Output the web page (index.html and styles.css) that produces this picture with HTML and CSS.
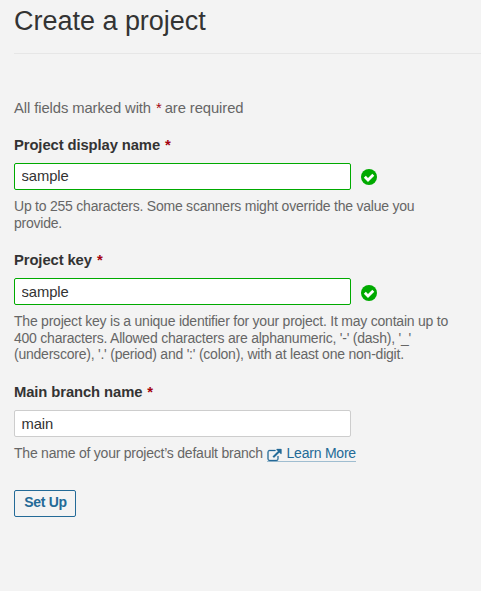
FILE: index.html
```html
<!DOCTYPE html>
<html lang="en">
<head>
<meta charset="utf-8">
<title>Create a project</title>
<link rel="stylesheet" href="styles.css">
</head>
<body>
<main class="page">
  <header class="page-header"><h1>Create a project</h1></header>
  <form class="form">
    <p class="notice">All fields marked with <span class="required">*</span> are required</p>
    <section class="field field-name">
      <label for="name">Project display name <span class="required">*</span></label>
      <div class="control">
        <input class="valid raised" id="name" type="text" value="sample">
        <svg class="check" viewBox="0 0 16 16"><circle cx="8" cy="8" r="8"/><path d="M3.8 7.8 7 11l5.3-5.3"/></svg>
      </div>
      <p class="hint">Up to 255 characters. Some scanners might override the value you<br>provide.</p>
    </section>
    <section class="field field-key">
      <label for="key">Project key <span class="required">*</span></label>
      <div class="control">
        <input class="valid" id="key" type="text" value="sample">
        <svg class="check check-low" viewBox="0 0 16 16"><circle cx="8" cy="8" r="8"/><path d="M3.8 7.8 7 11l5.3-5.3"/></svg>
      </div>
      <p class="hint">The project key is a unique identifier for your project. It may contain up to<br>400 characters. Allowed characters are alphanumeric, '-' (dash), '_'<br>(underscore), '.' (period) and ':' (colon), with at least one non-digit.</p>
    </section>
    <section class="field field-branch">
      <label for="branch">Main branch name <span class="required">*</span></label>
      <div class="control"><input id="branch" type="text" value="main"></div>
      <p class="hint">The name of your project’s default branch <a class="link" href="#"><svg class="external" viewBox="1 2 14 12"><path d="M12 9.25v2.5A2.25 2.25 0 0 1 9.75 14h-6.5A2.25 2.25 0 0 1 1 11.75v-6.5A2.25 2.25 0 0 1 3.25 3h5.5c.14 0 .25.11.25.25v.5c0 .14-.11.25-.25.25h-5.5C2.562 4 2 4.563 2 5.25v6.5c0 .688.563 1.25 1.25 1.25h6.5c.688 0 1.25-.563 1.25-1.25v-2.5c0-.14.11-.25.25-.25h.5c.14 0 .25.11.25.25zm3-6.75v4c0 .273-.227.5-.5.5a.497.497 0 0 1-.352-.148l-1.375-1.375L7.68 10.57a.27.27 0 0 1-.18.078.27.27 0 0 1-.18-.078l-.89-.89a.27.27 0 0 1-.078-.18.27.27 0 0 1 .078-.18l5.093-5.093-1.375-1.375A.497.497 0 0 1 10 2.5c0-.273.227-.5.5-.5h4c.273 0 .5.227.5.5z"/></svg>Learn More</a></p>
    </section>
    <button class="submit" type="button">Set Up</button>
  </form>
</main>
</body>
</html>
```
FILE: styles.css
```css
* { box-sizing: border-box; }
body {
  margin: 0;
  background: #f3f3f3;
  color: #333;
  font: 14.8px/18px "Liberation Sans", Arial, sans-serif;
}
h1, p { margin: 0; font-weight: 400; }
.page { padding-left: 14px; height: 591px; overflow: hidden; }
.page-header { height: 54px; padding-top: 5px; border-bottom: 1px solid #e6e6e6; }
h1 { font-size: 27px; line-height: 32px; letter-spacing: -0.02px; }
.form { padding-top: 45px; }
.notice { color: #666; white-space: nowrap; letter-spacing: -0.09px; }
.notice .required { margin-left: 1px; margin-right: -1px; }
.required { color: #a4030f; }
.field { display: flex; flex-direction: column; white-space: nowrap; }
.field-name { margin-top: 19px; height: 115px; }
.field-key { height: 132px; }
.field-branch { height: 107px; }
label { font-weight: 700; height: 27px; letter-spacing: -0.1px; }
label .required { margin-left: 1px; }
.control { display: flex; align-items: center; gap: 10px; height: 27px; }
input {
  width: 337px;
  height: 27px;
  margin: 0;
  padding: 0 6.5px;
  border: 1px solid #cdcdcd;
  border-radius: 2px;
  background: #fff;
  color: #333;
  font: inherit;
  letter-spacing: -0.1px;
}
.raised { padding-bottom: 2px; }
.valid { border-color: #0a0; }
.check { width: 16px; height: 16px; margin-top: 1px; fill: #0a0; }
.check-low { margin-top: 3px; }
.check path { fill: none; stroke: #fff; stroke-width: 2.8; }
.hint { margin-top: 8px; color: #666; font-size: 14px; line-height: 16.5px; letter-spacing: -0.225px; }
.link { color: #236a97; text-decoration: none; border-bottom: 1px solid #9fbdd0; }
.external { width: 15px; height: 12px; margin-right: 5px; vertical-align: -3px; fill: currentColor; stroke: currentColor; stroke-width: 0.3; overflow: visible; }
.submit {
  display: block;
  width: 62px;
  height: 27px;
  padding: 0 0 3px 1px;
  border: 1px solid #236a97;
  border-radius: 2px;
  background: transparent;
  color: #236a97;
  font: 700 14px/20px "Liberation Sans", Arial, sans-serif;
  letter-spacing: -0.3px;
}
```
